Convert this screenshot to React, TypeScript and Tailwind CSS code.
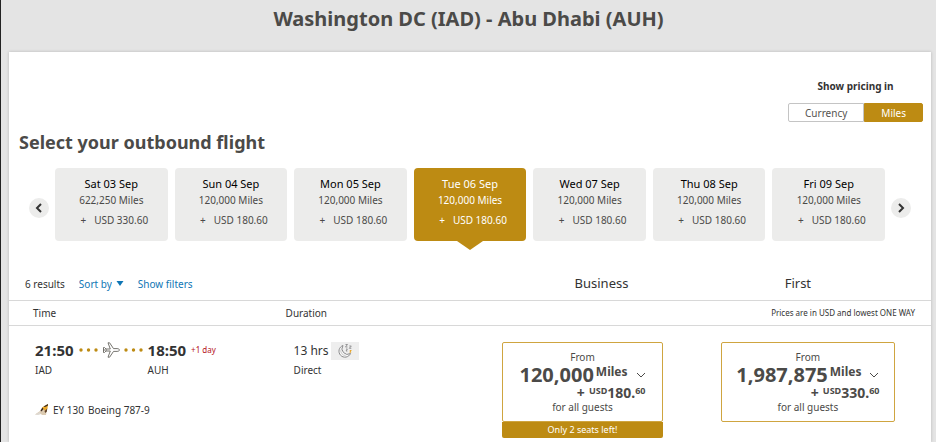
import React, { useState } from 'react'

const dates = [
    { day: "Sat 03 Sep", miles: "622,250", usd: "330.60" },
    { day: "Sun 04 Sep", miles: "120,000", usd: "180.60" },
    { day: "Mon 05 Sep", miles: "120,000", usd: "180.60" },
    { day: "Tue 06 Sep", miles: "120,000", usd: "180.60" },
    { day: "Wed 07 Sep", miles: "120,000", usd: "180.60" },
    { day: "Thu 08 Sep", miles: "120,000", usd: "180.60" },
    { day: "Fri 09 Sep", miles: "120,000", usd: "180.60" },
]

function Chevron({ className, strokeWidth = 2 }: { className: string, strokeWidth?: number }) {
    return (
        <svg viewBox="0 0 10 10" fill="none" stroke="currentColor" strokeWidth={strokeWidth} className={className} aria-hidden="true">
            <path d="M7 1 3 5l4 4" />
        </svg>
    )
}

function Dots() {
    return (
        <svg viewBox="0 0 19 4" className="h-1 w-[19px]" fill="#bd8b13" aria-hidden="true">
            <circle cx="2" cy="2" r="1.7" />
            <circle cx="9.5" cy="2" r="1.7" />
            <circle cx="17" cy="2" r="1.7" />
        </svg>
    )
}

function PlaneIcon() {
    return (
        <svg viewBox="0 0 18 18" className="h-[18px] w-[18px]" fill="none" stroke="#66645f" strokeWidth="0.9" strokeLinejoin="round" aria-hidden="true">
            <path d="M1.500 6.500v5M1.500 6.500h1L4 8h4.300L6 1.800h1.600L11.500 7.600H15c1.200 0 2.500.600 2.500 1.400S16.200 10.400 15 10.400H11.500L7.600 16.200H6L8.300 10H4l-1.500 1.500h-1" />
            <path d="M1.500 9H5" />
        </svg>
    )
}

function NightIcon() {
    return (
        <span className="flex h-[18px] w-7 items-center justify-center bg-[#eeeeee]">
            <svg viewBox="0 0 16 16" className="h-4 w-4" fill="none" aria-hidden="true">
                <path d="M6 2.500A6 6 0 1 0 13.500 10.500 5.600 5.600 0 0 1 6 2.500z" fill="#f8f8f8" stroke="#8a8a8c" />
                <path d="M4 6.500a4.700 4.700 0 0 0 4.500 6" stroke="#b4b4b6" strokeWidth="0.7" />
                <path d="M8.500 1.500h2L8.500 4h2M12.300 3h2l-2 2.300h2M9 6h1.400L9 8h1.400" stroke="#8a8a8c" strokeWidth="0.9" />
                <path d="M12.800 7.500h1.400l-1.400 1.700h1.400" stroke="#e8a526" />
            </svg>
        </span>
    )
}

function TailIcon() {
    return (
        <svg viewBox="0 0 14 12" className="h-3 w-3.5" aria-hidden="true">
            <path d="M0 10.500 5 7 7 3.500 13 0 11 11 7 11 6 10z" fill="#dccbb2" />
            <path d="M0 10.500 4.500 8 6 10 3 11z" fill="#ddd8d1" />
            <path d="M7 3.500 13 0 12.300 5 9.500 6.500z" fill="#eda928" />
            <path d="M8.500 2.500 13 0 12.800 1.800 10 3zM5.500 6.500l2-3 1 1.500-2 2.500z" fill="#3b2c22" />
            <path d="M9.500 7 12.300 4.500 11.800 7.500 10.300 9z" fill="#5f4127" />
        </svg>
    )
}

function FareButton({ miles, usd, cents, note }: { miles: string, usd: string, cents: string, note?: string }) {
    return (
        <button className="block w-full rounded-xs text-center text-[#4b4a48]">
            <span className="flex h-20 flex-col items-center rounded-xs border border-[#cfa540] pt-[7px]">
                <span className="text-[10px] leading-[15px]">From</span>
                <span className="flex flex-col items-end">
                    <span className="flex h-5 items-center">
                        <span className="text-xl leading-5 font-bold">{miles}</span>
                        <span className="ml-0.5 self-start text-xs leading-[14px] font-bold">Miles</span>
                        <Chevron className="ml-2 h-2.5 w-2.5 -rotate-90" strokeWidth={1} />
                    </span>
                    <span className="flex h-4 items-center text-sm leading-4 font-bold">
                        +<span className="ml-1 self-start text-[9px] leading-3">USD</span>{usd}.
                        <span className="self-start text-[9px] leading-3">{cents}</span>
                    </span>
                </span>
                <span className="text-[10px] leading-3">for all guests</span>
            </span>
            {note && (
                <span className="block h-4 rounded-b-xs bg-[#bd8b13] text-[9px] leading-4 text-white">{note}</span>
            )}
        </button>
    )
}

function App() {

    const [pricing, setPricing] = useState("Miles")
    const [selected, setSelected] = useState(3)

    return (
        <div className="min-h-screen border-l border-[#222222] bg-[#e4e4e4] font-['Noto_Sans',sans-serif] text-[#333333]">
            <h1 className="h-[52px] pt-1 text-center text-xl leading-[30px] font-bold text-[#4b4a48]">Washington DC (IAD) - Abu Dhabi (AUH)</h1>

            <main className="mr-[5px] ml-2 min-h-[390px] bg-white shadow-[0_0_3px_rgba(0,0,0,0.2)]">
                {/* Pricing switch */}
                <div className="flex justify-end pt-[27px] pr-2">
                    <div role="group" aria-labelledby="pricing-label">
                        <p id="pricing-label" className="text-center text-[10px] leading-[14px] font-bold">Show pricing in</p>
                        <div className="mt-2.5 flex">
                            {["Currency", "Miles"].map((item) => (
                                <button
                                    key={item}
                                    onClick={() => setPricing(item)}
                                    aria-pressed={pricing === item}
                                    className={`h-[19px] border px-4 text-[10px] leading-4 first:rounded-l-xs last:rounded-r-xs ${pricing === item ? "border-[#bd8b13] bg-[#bd8b13] text-white" : "border-[#c4c4c4] bg-white text-[#55534f]"}`}
                                >
                                    {item}
                                </button>
                            ))}
                        </div>
                    </div>
                </div>

                <h2 className="mt-2 px-2.5 text-lg leading-6 font-bold text-[#4b4a48]">Select your outbound flight</h2>

                {/* Dates */}
                <div className="mt-3.5 flex items-center px-5">
                    <button aria-label="Previous dates" className="mt-1.5 flex h-5 w-5 shrink-0 items-center justify-center rounded-full bg-[#ececeb]">
                        <Chevron className="h-2.5 w-2.5" />
                    </button>
                    <div className="mx-1.5 flex flex-1 gap-[7px]">
                        {dates.map((date, index) => (
                            <button
                                key={date.day}
                                onClick={() => setSelected(index)}
                                aria-pressed={selected === index}
                                className={`relative h-[73px] flex-1 rounded pb-1.5 text-[10px] leading-4 ${selected === index ? "bg-[#bd8b13] text-white" : "bg-[#ececeb] text-[#4b4a48]"}`}
                            >
                                <span className={`block text-[11px] ${selected === index ? "" : "text-black"}`}>{date.day}</span>
                                <span className="block">{date.miles} Miles</span>
                                <span className="mt-1 block pl-1.5">+<span className="ml-2">USD {date.usd}</span></span>
                                {selected === index && (
                                    <svg viewBox="0 0 26 10" className="absolute top-full left-1/2 h-2.5 w-[26px] -translate-x-1/2" fill="#bd8b13" aria-hidden="true">
                                        <path d="M0 0h26L13 9z" />
                                    </svg>
                                )}
                            </button>
                        ))}
                    </div>
                    <button aria-label="Next dates" className="mt-1.5 flex h-5 w-5 shrink-0 items-center justify-center rounded-full bg-[#ececeb]">
                        <Chevron className="h-2.5 w-2.5 rotate-180" />
                    </button>
                </div>

                {/* Flights */}
                <table className="mt-[25px] w-full table-fixed text-left text-[11px] leading-4">
                    <colgroup>
                        <col className="w-[30%]" />
                        <col className="w-[23.5%]" />
                        <col className="w-[23.7%]" />
                        <col />
                    </colgroup>
                    <thead>
                        <tr className="h-[34px] border-b border-[#d8d8d8]">
                            <td colSpan={2} className="pt-0.5 pl-4">
                                <div className="flex items-center text-[10px]">
                                    <span>6 results</span>
                                    <select aria-label="Sort by" className="ml-3.5 appearance-none bg-transparent text-[#0f76b5]">
                                        <option>Sort by</option>
                                    </select>
                                    <svg viewBox="0 0 8 5" className="pointer-events-none ml-1 h-[5px] w-2" fill="#0f76b5" aria-hidden="true">
                                        <path d="M0.500 0h7L4 5z" />
                                    </svg>
                                    <button className="ml-3.5 text-[#0f76b5]">Show filters</button>
                                </div>
                            </td>
                            <th className="pr-5 text-center text-[13px] font-normal">Business</th>
                            <th className="pr-14 text-center text-[13px] font-normal">First</th>
                        </tr>
                        <tr className="h-[25px] border-b border-[#d8d8d8]">
                            <th className="pl-6 text-[10px] font-normal">Time</th>
                            <th className="text-[10px] font-normal">Duration</th>
                            <td colSpan={2} className="pr-4 text-right text-[8px]">Prices are in USD and lowest ONE WAY</td>
                        </tr>
                    </thead>
                    <tbody>
                        <tr className="align-top">
                            <td className="pt-[15px] pl-[26px]">
                                <div className="grid grid-cols-[auto_auto_auto_1fr] items-center gap-x-[5px] gap-y-px">
                                    <span className="text-[15px] leading-[18px] font-bold">21:50</span>
                                    <span className="flex items-center gap-1">
                                        <Dots />
                                        <PlaneIcon />
                                        <Dots />
                                    </span>
                                    <span className="text-[15px] leading-[18px] font-bold">18:50</span>
                                    <span className="text-[8px] text-[#b5121b]">+1 day</span>
                                    <span className="col-span-2 text-[10px] leading-5">IAD</span>
                                    <span className="text-[10px] leading-5">AUH</span>
                                </div>
                                <div className="mt-[22px] flex items-center">
                                    <TailIcon />
                                    <span className="ml-1 text-[10px]">EY 130</span>
                                    <span className="ml-1 text-[10px]">Boeing 787-9</span>
                                </div>
                            </td>
                            <td className="pt-4 pl-2">
                                <div className="flex items-center gap-0.5">
                                    <span className="text-xs leading-[18px]">13 hrs</span>
                                    <NightIcon />
                                </div>
                                <p className="text-[10px] leading-5">Direct</p>
                            </td>
                            <td className="pt-4 pr-[58px]">
                                <FareButton miles="120,000" usd="180" cents="60" note="Only 2 seats left!" />
                            </td>
                            <td className="pt-4 pr-9">
                                <FareButton miles="1,987,875" usd="330" cents="60" />
                            </td>
                        </tr>
                    </tbody>
                </table>
            </main>
        </div>
    )
}

export default App
